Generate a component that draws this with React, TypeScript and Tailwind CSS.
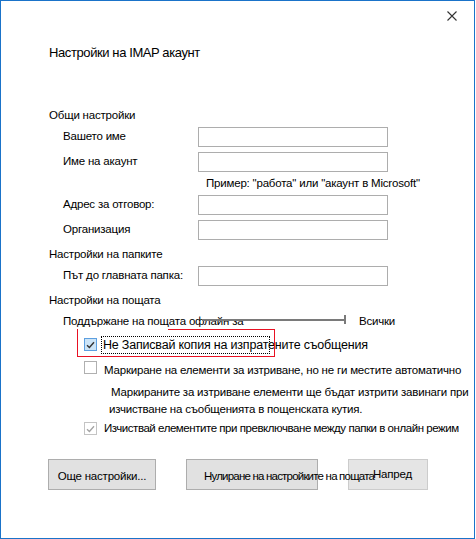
import React from "react";

const Field = ({ label, className }: { label: string; className: string }) => (
  <div className={`flex h-[20px] items-center pl-[14px] ${className}`}>
    <span className="w-[135px] whitespace-nowrap">{label}</span>
    <div className="h-[20px] w-[190px] border border-[#adadad] bg-white" />
  </div>
);

const Check = ({ state }: { state: "on" | "off" | "dim" }) => {
  if (state === "on") {
    return (
      <div className="flex h-[13px] w-[13px] shrink-0 items-center justify-center border border-[#5c9fe0] bg-[#cce4f7]">
        <svg width="9" height="8" viewBox="0 0 9 8">
          <path d="M1 4.2 L3.4 6.5 L8 1.2" fill="none" stroke="#333" strokeWidth="1.4" />
        </svg>
      </div>
    );
  }
  if (state === "dim") {
    return (
      <div className="flex h-[13px] w-[13px] shrink-0 items-center justify-center border border-[#c4c4c4] bg-white">
        <svg width="9" height="8" viewBox="0 0 9 8">
          <path d="M1 4.2 L3.4 6.5 L8 1.2" fill="none" stroke="#a3a3a3" strokeWidth="1.3" />
        </svg>
      </div>
    );
  }
  return <div className="h-[13px] w-[13px] shrink-0 border border-[#b0b0b0] bg-white" />;
};

export default function App() {
  return (
    <div className="h-[539px] w-[476px] bg-white font-['Liberation_Sans',Arial,sans-serif] text-[11.5px] tracking-[-0.2px] text-black">
      <div className="relative h-[539px] w-[475px] border border-[#1a73c9] bg-white">
        {/* title bar */}
        <div className="flex h-[20px] justify-end pr-[17px] pt-[10px]">
          <svg width="10" height="10" viewBox="0 0 10 10">
            <path d="M0.5 0.5 L9.5 9.5 M9.5 0.5 L0.5 9.5" stroke="#333" strokeWidth="1.1" />
          </svg>
        </div>

        <div className="pl-[48px]">
          <div className="mt-[22px] flex h-[20px] items-center text-[13px] tracking-[-0.4px]">Настройки на IMAP акаунт</div>

          <div className="mt-[43px] flex h-[20px] items-center">Общи настройки</div>
          <Field label="Вашето име" className="mt-[1px]" />
          <Field label="Име на акаунт" className="mt-[5px]" />
          <div className="ml-[157px] mt-[4px] flex h-[16px] items-center whitespace-nowrap">
            Пример: "работа" или "акаунт в Microsoft"
          </div>
          <Field label="Адрес за отговор:" className="mt-[3px]" />
          <Field label="Организация" className="mt-[5px]" />

          <div className="mt-[5px] flex h-[20px] items-center">Настройки на папките</div>
          <Field label="Път до главната папка:" className="mt-[1px]" />

          <div className="mt-[5px] flex h-[20px] items-center">Настройки на пощата</div>
          <div className="relative mt-[1px] flex h-[20px] items-center pl-[14px]">
            <span className="w-[296px] whitespace-nowrap">Поддържане на пощата офлайн за</span>
            <span>Всички</span>
            <div className="absolute left-[153px] top-[7px] h-[2px] w-[144px] bg-[#7a7a7a]" />
            <div className="absolute left-[295px] top-[3px] h-[9px] w-[2px] bg-[#7a7a7a]" />
          </div>

          <div className="mt-[4px] flex h-[18px] items-start pl-[35px]">
            <div className="mt-[2px]">
              <Check state="on" />
            </div>
            <div className="ml-[4px] h-[18px] w-[169px] border border-dotted border-black pl-[1px] text-[12.5px] leading-[17px] whitespace-nowrap">
              Не Записвай копия на изпратените съобщения
            </div>
          </div>

          <div className="mt-[6px] flex h-[20px] items-start pl-[35px]">
            <div className="mt-[1px]">
              <Check state="off" />
            </div>
            <span className="ml-[7px] whitespace-nowrap leading-[20px]">
              Маркиране на елементи за изтриване, но не ги местите автоматично
            </span>
          </div>

          <p className="mt-[4px] pl-[60px] indent-[2px] leading-[17px] whitespace-nowrap">
            Маркираните за изтриване елементи ще бъдат изтрити завинаги при
            <br />
            изчистване на съобщенията в пощенската кутия.
          </p>

          <div className="flex h-[20px] items-start pl-[35px]">
            <div className="mt-[4px]">
              <Check state="dim" />
            </div>
            <span className="ml-[7px] whitespace-nowrap leading-[20px] tracking-[-0.45px]">
              Изчиствай елементите при превключване между папки в онлайн режим
            </span>
          </div>

          <div className="-ml-[1px] mt-[21px] flex h-[31px] gap-[30px]">
            <div className="flex h-[31px] w-[108px] items-center justify-center border border-[#adadad] bg-[#e1e1e1] pt-[4px]">
              Още настройки...
            </div>
            <div className="relative z-10 flex h-[31px] w-[132px] items-center border border-[#adadad] bg-[#e1e1e1] pl-[17px] pt-[4px] tracking-[-0.8px] whitespace-nowrap">
              Нулиране на настройките на пощата
            </div>
            <div className="flex h-[31px] w-[80px] items-center justify-center border border-[#cccccc] bg-[#e5e5e5] pl-[9px]">
              Напред
            </div>
          </div>
        </div>

        {/* red highlight annotation */}
        <div className="absolute left-[76px] top-[328px] h-[28px] w-[198px] border-x border-b border-[#e81123]" />
        <div className="absolute left-[167px] top-[328px] h-[1px] w-[107px] bg-[#e81123]" />
      </div>
    </div>
  );
}
